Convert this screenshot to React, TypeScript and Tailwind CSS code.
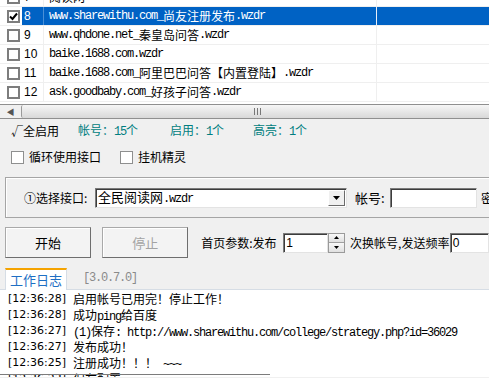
import React from 'react';

// ASCII runs rendered in a narrow mono face (SimSun-like half-width), CJK left as is
function Mixed({ text }: { text: string }) {
  const parts = text.split(/([\x20-\x7e]+)/).filter(Boolean);
  return (
    <>
      {parts.map((p, i) =>
        /^[\x20-\x7e]+$/.test(p) ? (
          <span key={i} className="font-['Liberation_Mono',monospace] text-[12px] tracking-[-1.2px] whitespace-pre">
            {p}
          </span>
        ) : (
          <span key={i}>{p}</span>
        )
      )}
    </>
  );
}

function Check({ checked = false, thick = false }: { checked?: boolean; thick?: boolean }) {
  return (
    <div
      className={
        thick
          ? 'w-[13px] h-[13px] bg-white border-2 border-[#7d7d7d] flex items-center justify-center'
          : 'w-[13px] h-[13px] bg-white border border-[#8e8f8f] flex items-center justify-center'
      }
    >
      {checked && (
        <svg width="9" height="9" viewBox="0 0 9 9">
          <path d="M1 4.5 L3.5 7 L8 1.5" stroke="#000" strokeWidth="2" fill="none" />
        </svg>
      )}
    </div>
  );
}

const rows = [
  { n: '7', t: '阅读网.wzdr', sel: false },
  { n: '8', t: 'www.sharewithu.com_尚友注册发布.wzdr', sel: true },
  { n: '9', t: 'www.qhdone.net_秦皇岛问答.wzdr', sel: false },
  { n: '10', t: 'baike.1688.com.wzdr', sel: false },
  { n: '11', t: 'baike.1688.com_阿里巴巴问答【内置登陆】.wzdr', sel: false },
  { n: '12', t: 'ask.goodbaby.com_好孩子问答.wzdr', sel: false },
];

const logs = [
  { time: '[12:36:28]', msg: '启用帐号已用完！停止工作！' },
  { time: '[12:36:28]', msg: '成功ping给百度' },
  { time: '[12:36:27]', msg: '(1)保存: http://www.sharewithu.com/college/strategy.php?id=36029' },
  { time: '[12:36:27]', msg: '发布成功！' },
  { time: '[12:36:25]', msg: '注册成功！！！ ~~~' },
  { time: '[12:36:23]', msg: '保存配置' },
];

const sunken =
  'bg-white border border-t-[#7a7a7a] border-l-[#7a7a7a] border-b-[#e3e3e3] border-r-[#e3e3e3] shadow-[inset_1px_1px_0_#3c3c3c]';

export default function App() {
  return (
    <div className="relative w-[489px] h-[378px] overflow-hidden bg-[#f0f0f0] text-[12px] leading-[14px] text-black font-['Noto_Sans_CJK_SC',sans-serif]">
      {/* account list */}
      <div className="h-[102px] overflow-hidden bg-white">
        <div className="-mt-[12px]">
          {rows.map((r) => (
            <div key={r.n} className="flex h-[19px] border-b border-[#efefef]">
              <div className="w-[22px] flex items-center pl-[7px]">
                <Check thick checked={r.sel} />
              </div>
              <div
                className={
                  r.sel
                    ? "w-[22px] flex items-center pl-[2px] bg-[#0062c4] text-white border-r border-[#4a8fd6] font-['Liberation_Sans',sans-serif]"
                    : "w-[22px] flex items-center pl-[2px] border-r border-[#efefef] font-['Liberation_Sans',sans-serif]"
                }
              >
                {r.n}
              </div>
              <div
                className={
                  r.sel
                    ? 'w-[333px] flex items-center pl-[5px] whitespace-nowrap bg-[#0062c4] text-white border-r border-[#e8eef8]'
                    : 'w-[333px] flex items-center pl-[5px] whitespace-nowrap border-r border-[#efefef]'
                }
              >
                <Mixed text={r.t} />
              </div>
              <div className={r.sel ? 'flex-1 bg-[#0062c4]' : 'flex-1'} />
            </div>
          ))}
        </div>
      </div>

      {/* horizontal scrollbar */}
      <div className="h-[17px] bg-white pt-[2px]">
        <div className="flex h-[15px] border-t border-b border-[#8f8f8f]">
          <div className="w-[21px] flex items-center justify-center bg-[#f0f0f0] text-[#555] text-[8px]">◀</div>
          <div className="flex-1 flex items-center pl-[232px] rounded-l-[2px] border-l border-[#9a9a9a] bg-linear-to-b from-[#f6f6f6] to-[#d8d8d8]">
            <div className="flex gap-[2px]">
              <div className="w-[1px] h-[7px] bg-[#777]" />
              <div className="w-[1px] h-[7px] bg-[#777]" />
              <div className="w-[1px] h-[7px] bg-[#777]" />
            </div>
          </div>
        </div>
      </div>

      {/* counters */}
      <div className="flex items-center h-[22px] pt-[1px]">
        <div className="w-[78px] pl-[11px]">√全启用</div>
        <div className="w-[92px] text-[#007e80]">
          <Mixed text="帐号：15个" />
        </div>
        <div className="w-[83px] text-[#007e80]">
          <Mixed text="启用：1个" />
        </div>
        <div className="text-[#007e80]">
          <Mixed text="高亮：1个" />
        </div>
      </div>

      {/* options */}
      <div className="flex items-center h-[22px] mt-[5px] pl-[11px]">
        <Check />
        <span className="ml-[5px] w-[91px]">循环使用接口</span>
        <Check />
        <span className="ml-[5px]">挂机精灵</span>
      </div>

      {/* interface group */}
      <div className="ml-[5px] mt-[9px] w-[500px] h-[41px] border border-[#a5a5a5] shadow-[inset_1px_1px_0_#ffffff] flex items-center pl-[18px]">
        <div className="w-[71px] text-[12px]">①选择接口:</div>
        <div className={`w-[252px] h-[20px] flex items-center ${sunken}`}>
          <div className="flex-1 pl-[2px] text-[13px]">
            全民阅读网<span className="font-['Liberation_Mono',monospace] text-[12px] tracking-[-1.2px]">.wzdr</span>
          </div>
          <div className="w-[17px] h-[16px] mr-[1px] bg-[#f0f0f0] border border-t-white border-l-white border-b-[#6a6a6a] border-r-[#6a6a6a] flex items-center justify-center">
            <svg width="7" height="4" viewBox="0 0 7 4">
              <path d="M0 0 H7 L3.5 4 Z" fill="#000" />
            </svg>
          </div>
        </div>
        <div className="ml-[8px] w-[35px] text-[13px]">帐号:</div>
        <div className={`w-[87px] h-[20px] ${sunken}`} />
        <div className="ml-[4px] text-[13px]">密</div>
      </div>

      {/* actions */}
      <div className="flex items-center mt-[9px] h-[31px] whitespace-nowrap">
        <button className="ml-[5px] w-[88px] h-[31px] bg-[#f3f3f3] border border-[#a9a9a9] border-r-[#6e6e6e] border-b-[#6e6e6e] shadow-[inset_1px_1px_0_#ffffff] text-[13px]">
          开始
        </button>
        <button className="ml-[11px] w-[88px] h-[31px] bg-[#f3f3f3] border border-[#a9a9a9] border-r-[#6e6e6e] border-b-[#6e6e6e] shadow-[inset_1px_1px_0_#ffffff] text-[13px] text-[#a3a3a3]">
          停止
        </button>
        <div className="ml-[13px] w-[84px] text-[12px]">首页参数:发布</div>
        <div className={`w-[46px] h-[20px] pl-[2px] flex items-center font-['Liberation_Sans',sans-serif] ${sunken}`}>1</div>
        <div className="w-[17px] h-[20px] flex flex-col border border-[#9a9a9a]">
          <div className="flex-1 flex items-center justify-center bg-linear-to-b from-[#f8f8f8] to-[#e0e0e0] border-b border-[#a0a0a0]">
            <svg width="5" height="3" viewBox="0 0 5 3">
              <path d="M0 3 H5 L2.5 0 Z" fill="#000" />
            </svg>
          </div>
          <div className="flex-1 flex items-center justify-center bg-linear-to-b from-[#f8f8f8] to-[#e0e0e0]">
            <svg width="5" height="3" viewBox="0 0 5 3">
              <path d="M0 0 H5 L2.5 3 Z" fill="#000" />
            </svg>
          </div>
        </div>
        <div className="ml-[5px] w-[102px] text-[12px]">次换帐号,发送频率</div>
        <div className={`w-[40px] h-[20px] pl-[2px] flex items-center font-['Liberation_Sans',sans-serif] ${sunken}`}>0</div>
      </div>

      {/* tabs */}
      <div className="flex items-end mt-[10px] h-[22px] border-b border-[#d6dde5]">
        <div className="ml-[5px] w-[62px] h-[22px] -mb-[1px] bg-white border-t-2 border-t-[#f5a300] border-x border-x-[#d6dde5] flex items-center justify-center text-[13px] text-[#1e6fc4]">
          工作日志
        </div>
        <div className="ml-[16px] h-[22px] flex items-center text-[#8a8a8a]">
          <Mixed text="[3.0.7.0]" />
        </div>
      </div>

      {/* work log */}
      <div className="bg-white h-[87px] pt-[1px] pl-[8px] overflow-hidden">
        {logs.map((l, i) => (
          <div key={i} className="h-[16px] leading-[16px] flex whitespace-nowrap">
            <span className="font-['DejaVu_Sans',sans-serif] text-[11px]">{l.time}</span>
            <span className="ml-[7px] text-[12px]">
              <Mixed text={l.msg} />
            </span>
          </div>
        ))}
      </div>
      <div className="absolute left-0 top-[374px] w-[270px] h-[1px] bg-[#7c7c7c]" />
    </div>
  );
}
